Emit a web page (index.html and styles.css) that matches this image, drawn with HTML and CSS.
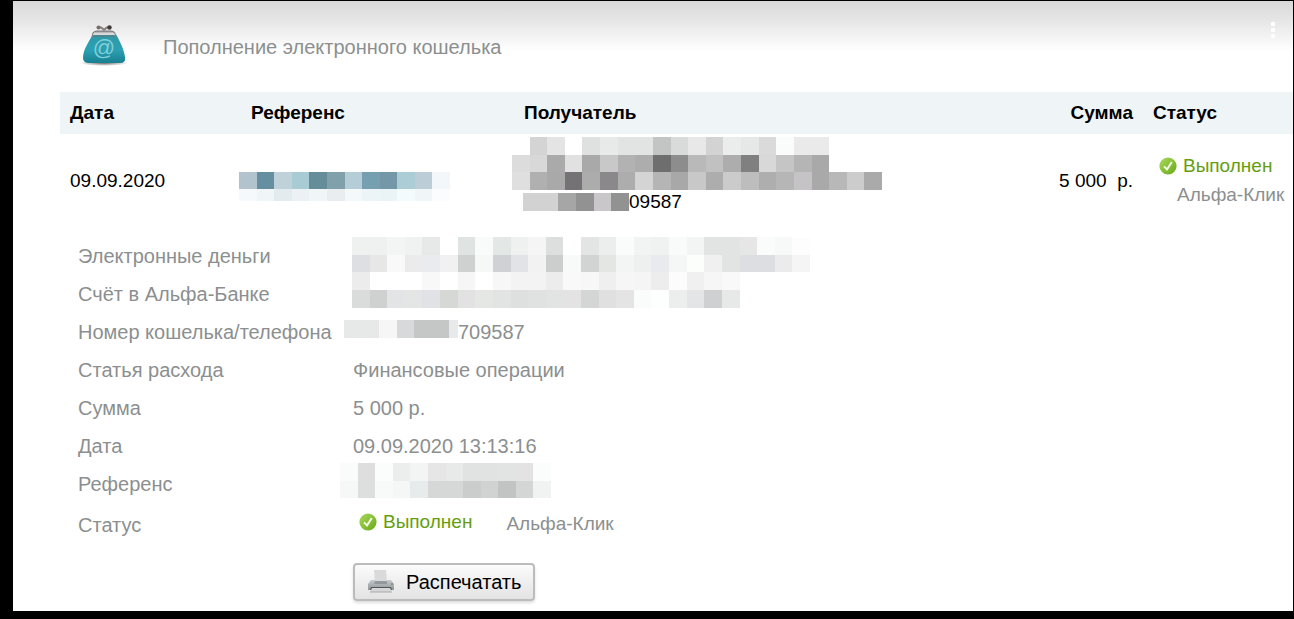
FILE: index.html
```html
<!DOCTYPE html>
<html lang="ru">
<head>
<meta charset="utf-8">
<meta name="viewport" content="width=device-width, initial-scale=1">
<title>Пополнение электронного кошелька</title>
<link rel="stylesheet" href="styles.css">
</head>
<body>
<svg class="defs" aria-hidden="true">
  <defs>
    <linearGradient id="ball" x1="0" y1="0" x2="1" y2="1"><stop offset="0" stop-color="#a9d85c"/><stop offset="1" stop-color="#68aa18"/></linearGradient>
    <symbol id="done" viewBox="0 0 18 18">
      <circle cx="9" cy="9" r="8.6" fill="url(#ball)"/>
      <path d="M5 9.400 L8 12.500 L12.800 5" fill="none" stroke="#f4fbe6" stroke-width="2"/>
    </symbol>
  </defs>
</svg>
<main class="page">
  <header class="top">
    <svg class="purse" viewBox="0 0 48 44" aria-hidden="true">
      <defs>
        <linearGradient id="bag" x1="0" y1="0" x2="0" y2="1"><stop offset="0" stop-color="#2e98a8"/><stop offset=".55" stop-color="#2ba0b2"/><stop offset="1" stop-color="#187f91"/></linearGradient>
        <linearGradient id="clasp" x1="0" y1="0" x2="0" y2="1"><stop offset="0" stop-color="#8d8a8b"/><stop offset=".5" stop-color="#e6e6e8"/><stop offset="1" stop-color="#a9adb0"/></linearGradient>
        <radialGradient id="shade"><stop offset="0" stop-color="#666"/><stop offset="1" stop-color="#777" stop-opacity="0"/></radialGradient>
      </defs>
      <ellipse cx="24" cy="38" rx="24" ry="3" fill="url(#shade)"/>
      <path d="M13 9 C9 17 3 24 3 33 Q3 38 9 38 H40 Q46 38 45 32 C44 24 40 17 36 9 Z" fill="url(#bag)"/>
      <path d="M12 12 Q11 6 16 6 H32 Q37 6 36 12 L34 10 H14 Z" fill="url(#clasp)"/>
      <path d="M12 12 L13 8 Q14 6 17 6 H31 Q35 6 36 12" fill="none" stroke="#77787a" stroke-width="1"/>
      <path d="M13 11 H35" stroke="#66777c" stroke-width="1.2"/>
      <path d="M18 2 Q22 2 24 5 Q26 2 30 2" fill="none" stroke="#8b8382" stroke-width="2"/>
      <circle cx="18.500" cy="2.500" r="2" fill="#756d6b"/><circle cx="29.500" cy="2.500" r="2.200" fill="#423a39"/>
      <text class="at" x="24" y="30" text-anchor="middle">@</text>
    </svg>
    <h1 class="title">Пополнение электронного кошелька</h1>
    <button class="more" type="button" aria-label="Меню"><svg viewBox="0 0 6 20" width="6" height="20"><g fill="#fff"><circle cx="3" cy="3" r="2.200"/><circle cx="3" cy="9" r="2.200"/><circle cx="3" cy="15" r="2.200"/></g></svg></button>
  </header>

  <div class="content">
    <table class="payments">
      <colgroup><col class="c-date"><col class="c-ref"><col><col class="c-sum"><col class="c-status"></colgroup>
      <thead><tr><th>Дата</th><th class="ref-head">Референс</th><th>Получатель</th><th class="num">Сумма</th><th>Статус</th></tr></thead>
      <tbody><tr>
        <td>09.09.2020</td>
        <td class="ref"><svg class="mosaic m-ref" data-heights="17,12" data-rows="b3c3cd 658fa0 bfd1d9 a9cbd3 658c99 80a0ab b5cdd6 76a0af 7598a8 accdd5 bccdd7 f3f7fa|f6f9fb f0f5f7 e3ebef ebf1f4 f0f6f8 e9edef f3f9fb edf4f7 eaf3f6 f4fbfd f0f5f8 fafcfd"></svg></td>
        <td class="payee">
          <svg class="mosaic m-payee" data-heights="18,17,18" data-rows="ffffff d4d4d4 e4e4e4 ffffff dfe1e1 e8e9e9 e1e4e3 e2e4e3 c3c5c4 d9dbda e8e8e8 d3d3d3 ebecec e6e8e7 dadada fafbfb e9eae9 e9eae9 ffffff ffffff ffffff|dcdcdc d8d8d8 aaaaaa e1e1e1 a9a9a9 c8c8c8 b2b2b2 adadad 6e6e6e 8d8d8d b9b9b9 c1c1c1 adadad 808080 d8d8d8 c5c5c5 b5b5b5 a9a9a9 ffffff ffffff ffffff|dfdfdf b0b0b0 a9a9a9 747274 acacac 8a888a adadad d4d4d4 b5b5b5 a8a8a8 c8c8c8 adadad cbcbcb bdbdbd aeaeae b6b6b6 c5c3c5 a9a9a9 b8b8b8 cccccc aaaaaa"></svg>
          <div class="masked masked-payee"><svg class="mosaic m-account" data-heights="18" data-rows="d2d2d2 d2d2d2 a6a6a6 929292 cac7ca 929292"></svg><span>09587</span></div>
        </td>
        <td class="num">5 000&nbsp; р.</td>
        <td class="state">
          <div class="done"><svg class="tick" aria-hidden="true"><use href="#done"/></svg>Выполнен</div>
          <div class="channel">Альфа-Клик</div>
        </td>
      </tr></tbody>
    </table>

    <dl class="details">
      <dt>Электронные деньги</dt>
      <dd class="two-rows"><svg class="mosaic m-money" data-heights="18,17,18,18" data-rows="eef1f0 eef1f0 f3f4f4 f0f2f1 e6e9e8 ffffff dfe3e1 f8fbfa e3e7e5 eef1f0 f5f5f5 dcdfdd ffffff e2e5e4 eceeee fafcfb f2f4f3 f0f2f1 f9fbfa f3f5f4 e2e4e3 e2e3e3 e6e6e6 fafcfb f7f9f8 fdfdfd|dddfe3 e8e7e8 f9f9f9 ebebeb eaebef f1f1f2 cfd0d0 f5f8f7 cfd1d5 e2e3e7 f2f2f2 cccecd f8faf9 d1d4d2 e3e6e3 f3f5f4 eef0ef e8eaed f4f7f6 fbfefa f0f0f1 e1e4e3 dcdee2 dcdee2 ebebec f5f5f5|ececec ffffff ffffff ffffff f8f8f8 ffffff f6f6f6 ffffff f7f7f7 f3f3f3 f3f3f3 ececec f9f9f9 f7f7f7 efefef f6f6f6 f5f5f5 ededed fcfcfc f0f0f0 f6f6f6 f9f9f9 ffffff ffffff ffffff ffffff|dadcdb cfd0d0 e2e4e6 e3e6e5 e0e2e5 d6d8d6 e1e2e1 e5e7e5 e2e4e3 dee0df e0e2e1 e2e3e3 e3e3e3 d3d6d5 e0e0e0 e3e4e3 fafcfb fdfefe eceeee e3e5e6 cfd0d2 e7e8e8 ffffff ffffff ffffff ffffff"></svg></dd>
      <dt>Счёт в Альфа-Банке</dt>
      <dt>Номер кошелька/телефона</dt>
      <dd class="masked masked-phone"><svg class="mosaic m-phone" data-heights="18" data-rows="e7e8e8 e7e8e8 e7e8e8 e7e8e8 f6f6f6 f6f6f6 d8d9da d8d9da c5c7c6 c5c7c6 c5c7c6 c5c7c6 e8e9eb"></svg><span>709587</span></dd>
      <dt>Статья расхода</dt><dd>Финансовые операции</dd>
      <dt>Сумма</dt><dd>5 000 р.</dd>
      <dt>Дата</dt><dd>09.09.2020 13:13:16</dd>
      <dt>Референс</dt>
      <dd class="outdent"><svg class="mosaic m-code" data-heights="18,17" data-rows="fafbfb dedede fbfcfc ebeeed f3f5f4 e5e6e5 e8eae9 e1e3e2 e1e3e2 e2e4e3 e3e3e3 fbfcfc|f6f8f8 dddfde f8faf9 f5f7f7 e8ebec d6d7d7 d6d7d7 cbcdcc d1d3d2 c2c4c4 d4d5d5 f0f3f2"></svg></dd>
      <dt class="last">Статус</dt>
      <dd class="status"><span class="done"><svg class="tick" aria-hidden="true"><use href="#done"/></svg>Выполнен</span><span class="channel">Альфа-Клик</span></dd>
    </dl>

    <button class="print" type="button">
      <svg class="printer" viewBox="0 0 28 24" aria-hidden="true">
        <defs><linearGradient id="case" x1="0" y1="0" x2="0" y2="1"><stop offset="0" stop-color="#c6cacc"/><stop offset="1" stop-color="#8f9496"/></linearGradient></defs>
        <path d="M7 0 H19 L20 12 H8 Z" fill="#dadada"/>
        <path d="M4 10 H8 V13 H20 V10 H24 L27 14 V20 H1 V14 Z" fill="url(#case)"/>
        <path d="M8 11 H20 V14 H7 Z" fill="#92989b"/>
        <path d="M4 17 H24 L25 20 H3 Z" fill="#55585a"/>
        <path d="M5 18 H23 L25 22 H3 Z" fill="#d6d6d6"/>
        <path d="M3 22 H25" stroke="#aaa" stroke-width="1"/>
        <circle cx="25" cy="14" r="1" fill="#6f9b6c"/>
      </svg>
      Распечатать
    </button>
  </div>
</main>
<script src="mosaic.js"></script>
</body>
</html>
```
FILE: styles.css
```css
* { box-sizing: border-box; }
body {
  margin: 0;
  padding: 1px 1px 8px 13px;
  background: #000;
  color: #000;
  font: 19px/24px "Liberation Sans", Arial, sans-serif;
}
svg { display: block; flex: none; }
.defs { position: absolute; width: 0; height: 0; }
.page {
  background: linear-gradient(#d9d9d9, #e6e6e6 20px, #fff 50px) #fff;
  padding-bottom: 10px;
}
.top {
  display: flex;
  align-items: center;
  height: 91px;
  padding: 0 17px 0 67px;
}
.purse { width: 48px; height: 44px; }
.at { font: 22px "Liberation Sans", Arial, sans-serif; fill: #7fcfda; }
.title {
  margin: 0 0 0 35px;
  color: #8c8f8f;
  font-size: 20px;
  font-weight: normal;
}
.more {
  margin: 0 0 32px auto;
  padding: 0;
  border: 0;
  background: none;
}
.content { padding-left: 47px; }

.payments { width: 100%; border-collapse: collapse; table-layout: fixed; }
.payments th {
  height: 42px;
  padding: 0 10px;
  background: #eff4f7;
  text-align: left;
}
.payments td { height: 92px; padding: 2px 10px 0; }
.payments .ref-head { padding-left: 12px; }
.payments .num { text-align: right; }
.payments .ref { padding: 12px 0 0; }
.payments .payee { padding: 3px 0 0; vertical-align: top; }
.payments .state { padding: 0 0 0 16px; }
.c-date { width: 179px; }
.c-ref { width: 275px; }
.c-sum { width: 180px; }
.c-status { width: 150px; }

.m-ref { width: 211px; height: 29px; }
.m-payee { width: 370px; height: 53px; margin-left: -2px; }
.m-account { width: 106px; height: 18px; }
.m-money { width: 458px; height: 71px; }
.m-phone { width: 114px; height: 18px; margin-bottom: 6px; }
.m-code { width: 211px; height: 35px; margin-bottom: 8px; }
.masked { display: flex; align-items: center; }
.masked-payee { margin-left: 9px; }

.done { display: flex; align-items: center; gap: 6px; color: #659e0c; }
.tick { width: 18px; height: 18px; }
.channel { color: #8c8f8f; }
.state .done { margin-bottom: 5px; }
.state .channel { padding-left: 18px; white-space: nowrap; }

.details {
  display: grid;
  grid-template-columns: 275px 1fr;
  grid-auto-rows: 38px;
  align-items: center;
  margin: 11px 0 0;
  padding-left: 18px;
  color: #8c8f8f;
  font-size: 20px;
}
.details dt { grid-column: 1; white-space: nowrap; }
.details dd { grid-column: 2; margin: 0; }
.details .two-rows { grid-row: 1 / span 2; align-self: start; margin-left: -1px; }
.details .masked-phone { margin-left: -9px; }
.details .outdent { margin-left: -13px; }
.details .last { padding-top: 6px; }
.details .status {
  display: flex;
  align-items: center;
  gap: 34px;
  padding-left: 6px;
  font-size: 19px;
}
.status .channel { padding-top: 4px; }

.print {
  display: flex;
  align-items: center;
  gap: 11px;
  height: 38px;
  margin: 22px 0 0 293px;
  padding: 0 12px;
  border: 2px solid #bcbcbc;
  border-radius: 4px;
  background: linear-gradient(#fbfbfb, #e3e3e3);
  box-shadow: 0 2px 3px #ddd;
  color: #000;
  font: 20px/24px "Liberation Sans", Arial, sans-serif;
}
.printer { width: 28px; height: 24px; }
```
FILE: mosaic.js
```js
// Fills each .mosaic with the colour cells listed in its data attributes.
document.querySelectorAll('.mosaic').forEach(function (svg) {
  var rows = svg.dataset.rows.split('|');
  var heights = svg.dataset.heights.split(',').map(Number);
  var y = 0;
  var columns = rows[0].split(' ').length;
  rows.forEach(function (row, r) {
    row.split(' ').forEach(function (color, x) {
      var cell = document.createElementNS('http://www.w3.org/2000/svg', 'rect');
      cell.setAttribute('x', x);
      cell.setAttribute('y', y);
      cell.setAttribute('width', 1);
      cell.setAttribute('height', heights[r]);
      cell.setAttribute('fill', '#' + color);
      svg.appendChild(cell);
    });
    y += heights[r];
  });
  svg.setAttribute('viewBox', '0 0 ' + columns + ' ' + y);
  svg.setAttribute('preserveAspectRatio', 'none');
  svg.setAttribute('shape-rendering', 'crispEdges');
  svg.setAttribute('aria-hidden', 'true');
});
```
